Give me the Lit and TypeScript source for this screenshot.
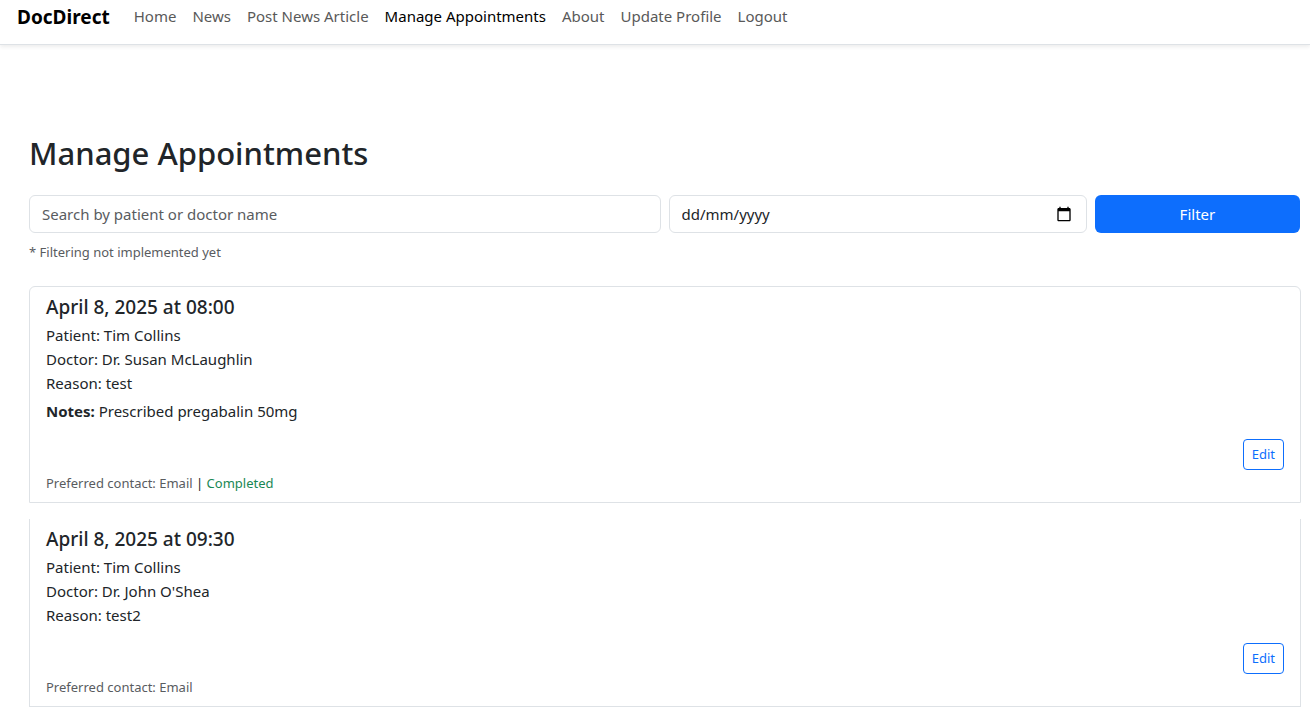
import { LitElement, html, css, nothing } from "lit";
import { customElement, property, query, state } from "lit/decorators.js";
import { classMap } from "lit/directives/class-map.js";

interface Appointment {
  when: string;
  patient: string;
  doctor: string;
  reason: string;
  notes?: string;
  contact: string;
  completed: boolean;
}

const NAV_LINKS = [
  "Home",
  "News",
  "Post News Article",
  "Manage Appointments",
  "About",
  "Update Profile",
  "Logout",
];

const APPOINTMENTS: Appointment[] = [
  {
    when: "April 8, 2025 at 08:00",
    patient: "Tim Collins",
    doctor: "Dr. Susan McLaughlin",
    reason: "test",
    notes: "Prescribed pregabalin 50mg",
    contact: "Email",
    completed: true,
  },
  {
    when: "April 8, 2025 at 09:30",
    patient: "Tim Collins",
    doctor: "Dr. John O'Shea",
    reason: "test2",
    contact: "Email",
    completed: false,
  },
];

@customElement("site-nav")
export class SiteNav extends LitElement {
  static styles = css`
    :host {
      display: block;
    }
    .bar {
      display: flex;
      align-items: center;
      gap: 24px;
      padding: 2px 17px 12px;
      background: #fff;
      border-bottom: 1px solid #dee2e6;
      box-shadow: 0 2px 4px rgba(0, 0, 0, 0.075);
    }
    .brand {
      color: #000;
      font-size: 19px;
      font-weight: 700;
      line-height: 30px;
      text-decoration: none;
    }
    .links {
      display: flex;
      flex-wrap: wrap;
      gap: 16px;
      margin: 0;
      padding: 0 0 2px;
      list-style: none;
    }
    .link {
      color: #595959;
      text-decoration: none;
    }
    .active {
      color: #000;
    }
  `;

  render() {
    return html`
      <nav class="bar">
        <a class="brand" href="#">DocDirect</a>
        <ul class="links">
          ${NAV_LINKS.map((name) => {
            const active = name === "Manage Appointments";
            return html`<li>
              <a
                class=${classMap({ link: true, active })}
                href="#"
                aria-current=${active ? "page" : nothing}
                >${name}</a
              >
            </li>`;
          })}
        </ul>
      </nav>
    `;
  }
}

@customElement("date-field")
export class DateField extends LitElement {
  @state() private editing = false;
  @query("input") private input!: HTMLInputElement;

  static styles = css`
    :host {
      display: block;
      position: relative;
    }
    .input {
      box-sizing: border-box;
      width: 100%;
      height: 38px;
      padding: 6px 12px;
      border: 1px solid #dee2e6;
      border-radius: 6px;
      background: #fff;
      color: #212529;
      font: inherit;
    }
    .input::placeholder {
      color: #212529;
      opacity: 1;
    }
    .input::-webkit-calendar-picker-indicator {
      opacity: 0;
    }
    .picker {
      position: absolute;
      top: 11px;
      right: 15px;
      padding: 0;
      border: 0;
      background: none;
      color: #000;
      cursor: pointer;
    }
    .icon {
      display: block;
      width: 16px;
      height: 16px;
    }
  `;

  private startEditing() {
    this.editing = true;
  }

  private stopEditing() {
    this.editing = this.input.value !== "";
  }

  private async openPicker() {
    this.editing = true;
    await this.updateComplete;
    this.input.focus();
    this.input.showPicker();
  }

  render() {
    return html`
      <input
        class="input"
        type=${this.editing ? "date" : "text"}
        placeholder="dd/mm/yyyy"
        aria-label="Appointment date"
        @focus=${this.startEditing}
        @blur=${this.stopEditing}
      />
      <button
        class="picker"
        type="button"
        aria-label="Show date picker"
        @click=${this.openPicker}
      >
        <svg class="icon" viewBox="0 0 24 24" aria-hidden="true">
          <path
            fill="currentColor"
            d="M20 3h-1V1h-2v2H7V1H5v2H4c-1.1 0-2 .9-2 2v16c0 1.1.9 2 2 2h16c1.1 0 2-.9 2-2V5c0-1.1-.9-2-2-2zm0 18H4V8h16v13z"
          />
        </svg>
      </button>
    `;
  }
}

@customElement("appointment-item")
export class AppointmentItem extends LitElement {
  @property({ attribute: false }) appointment!: Appointment;

  static styles = css`
    :host {
      display: block;
      padding: 8px 16px;
      border: 1px solid #dee2e6;
    }
    .when {
      margin: 0 0 3px;
      font-size: 19px;
      font-weight: 500;
      line-height: 25px;
    }
    .line {
      margin: 0;
    }
    .notes {
      margin: 4px 0 0;
    }
    .actions {
      display: flex;
      justify-content: flex-end;
      margin-top: 16px;
    }
    .edit {
      padding: 4px 8px;
      border: 1px solid #0d6efd;
      border-radius: 4px;
      background: transparent;
      color: #0d6efd;
      font: inherit;
      font-size: 13px;
      line-height: 21px;
      cursor: pointer;
    }
    .meta {
      margin: 0;
    }
    .small {
      font-size: 13px;
      line-height: 20px;
    }
    .contact {
      color: #595c5f;
    }
    .done {
      color: #198754;
    }
  `;

  render() {
    const a = this.appointment;
    return html`
      <h5 class="when">${a.when}</h5>
      <p class="line">Patient: ${a.patient}</p>
      <p class="line">Doctor: ${a.doctor}</p>
      <p class="line">Reason: ${a.reason}</p>
      ${a.notes
        ? html`<p class="notes"><strong>Notes:</strong> ${a.notes}</p>`
        : nothing}
      <div class="actions">
        <button class="edit" type="button">Edit</button>
      </div>
      <p class="meta">
        <small class="small">
          <span class="contact">Preferred contact: ${a.contact}</span>
          ${a.completed
            ? html`| <span class="done">Completed</span>`
            : nothing}
        </small>
      </p>
    `;
  }
}

@customElement("app-root")
export class AppRoot extends LitElement {
  static styles = css`
    :host {
      display: block;
      color: #212529;
      background: #fff;
      font-family: "Segoe UI", "Noto Sans", "Open Sans", sans-serif;
      font-size: 15px;
      line-height: 24px;
    }
    .page {
      padding: 89px 9px 0 29px;
    }
    .title {
      margin: 0 0 23px;
      font-size: 31px;
      font-weight: 500;
      line-height: 38px;
    }
    .filters {
      display: grid;
      grid-template-columns: repeat(12, minmax(0, 1fr));
      gap: 8px;
      margin-right: 1px;
    }
    .search {
      grid-column: span 6;
      box-sizing: border-box;
      width: 100%;
      height: 38px;
      padding: 6px 12px;
      border: 1px solid #dee2e6;
      border-radius: 6px;
      background: #fff;
      color: #212529;
      font: inherit;
    }
    .search::placeholder {
      color: #595c5f;
      opacity: 1;
    }
    .date {
      grid-column: span 4;
    }
    .submit {
      grid-column: span 2;
      height: 38px;
      padding: 6px 12px;
      border: 0;
      border-radius: 6px;
      background: #0d6efd;
      color: #fff;
      font: inherit;
      cursor: pointer;
    }
    .hint {
      margin: 7px 0 22px;
      color: #595c5f;
      font-size: 13px;
    }
    .list {
      display: flex;
      flex-direction: column;
      gap: 16px;
    }
    .item:first-child {
      border-radius: 6px 6px 0 0;
    }
    .item:not(:first-child) {
      border-top: 0;
    }
  `;

  render() {
    return html`
      <site-nav></site-nav>
      <main class="page">
        <h2 class="title">Manage Appointments</h2>
        <form class="filters" @submit=${(e: Event) => e.preventDefault()}>
          <input
            class="search"
            type="text"
            aria-label="Search by patient or doctor name"
            placeholder="Search by patient or doctor name"
          />
          <date-field class="date"></date-field>
          <button class="submit" type="submit">Filter</button>
        </form>
        <p class="hint">* Filtering not implemented yet</p>
        <div class="list">
          ${APPOINTMENTS.map(
            (a) =>
              html`<appointment-item
                class="item"
                .appointment=${a}
              ></appointment-item>`,
          )}
        </div>
      </main>
    `;
  }
}
